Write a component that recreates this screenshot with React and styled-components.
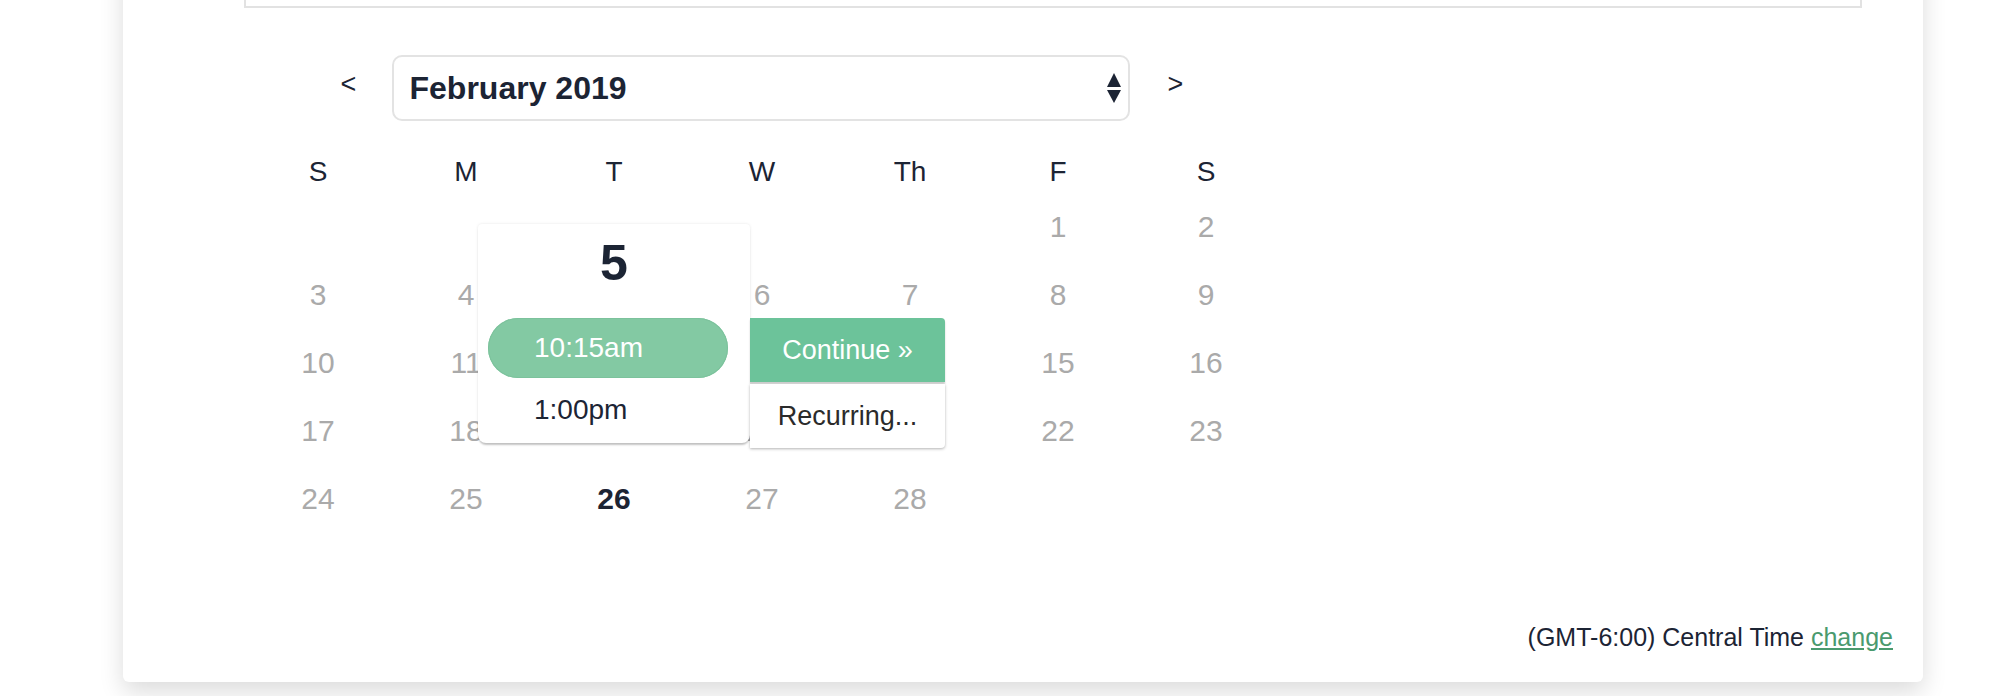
import React from "react";
import styled, { createGlobalStyle } from "styled-components";

const GlobalStyle = createGlobalStyle`
  body {
    margin: 0;
    background: #ffffff;
    font-family: "Liberation Sans", Arial, sans-serif;
    color: #1c2434;
  }
`;

const weeks = [
  [null, null, null, null, null, 1, 2],
  [3, 4, 5, 6, 7, 8, 9],
  [10, 11, 12, 13, 14, 15, 16],
  [17, 18, 19, 20, 21, 22, 23],
  [24, 25, 26, 27, 28, null, null],
];

const dayNames = ["S", "M", "T", "W", "Th", "F", "S"];

export default function App() {
  return (
    <>
      <GlobalStyle />
      <Page>
        <Card>
          <TopBox />
          <Calendar>
            <NavRow>
              <NavButton>&lt;</NavButton>
              <MonthSelect>
                <span>February 2019</span>
                <svg width="14" height="30" viewBox="0 0 14 30">
                  <polygon points="7,0 14,14 0,14" fill="#1c2434" />
                  <polygon points="0,17 14,17 7,30" fill="#1c2434" />
                </svg>
              </MonthSelect>
              <NavButton>&gt;</NavButton>
            </NavRow>

            <WeekHeader>
              {dayNames.map((d, i) => (
                <HeaderCell key={i}>{d}</HeaderCell>
              ))}
            </WeekHeader>

            <DayGrid>
              {weeks.flat().map((day, i) => (
                <DayCell key={i} $today={day === 26}>
                  {day}
                  {day === 5 && (
                    <Popup>
                      <PopupDay>5</PopupDay>
                      <Slot $selected>10:15am</Slot>
                      <Slot>1:00pm</Slot>
                      <Actions>
                        <ContinueButton>Continue »</ContinueButton>
                        <RecurringButton>Recurring...</RecurringButton>
                      </Actions>
                    </Popup>
                  )}
                </DayCell>
              ))}
            </DayGrid>
          </Calendar>

          <Footer>
            (GMT-6:00) Central Time <ChangeLink href="#">change</ChangeLink>
          </Footer>
        </Card>
      </Page>
    </>
  );
}

const Page = styled.div`
  padding-left: 123px;
  height: 696px;
  overflow: hidden;
`;

const Card = styled.div`
  width: 1800px;
  box-sizing: border-box;
  margin-top: -40px;
  padding: 0 30px 30px 121px;
  background: #fff;
  border-radius: 0 0 6px 6px;
  box-shadow: 0 10px 24px rgba(0, 0, 0, 0.14);
`;

const TopBox = styled.div`
  height: 48px;
  box-sizing: border-box;
  margin-right: 31px;
  border: 2px solid #e2e2e2;
  border-top: none;
`;

const Calendar = styled.div`
  width: 1036px;
`;

const NavRow = styled.div`
  display: flex;
  justify-content: center;
  margin-top: 47px;
  height: 66px;
`;

const NavButton = styled.button`
  width: 92px;
  padding: 0 0 7px;
  border: none;
  background: none;
  font-family: inherit;
  font-size: 27px;
  color: #1c2434;
  cursor: pointer;
`;

const MonthSelect = styled.div`
  width: 738px;
  box-sizing: border-box;
  display: flex;
  align-items: center;
  justify-content: space-between;
  margin-left: -3px;
  padding: 0 7px 0 16px;
  border: 2px solid #e3e3e3;
  border-radius: 10px;
  font-size: 32px;
  font-weight: 700;
  color: #1c2434;
`;

const WeekHeader = styled.div`
  display: grid;
  grid-template-columns: repeat(7, 148px);
  margin-top: 30px;
  height: 42px;
`;

const HeaderCell = styled.div`
  display: flex;
  align-items: center;
  justify-content: center;
  font-size: 28px;
  color: #1c2434;
`;

const DayGrid = styled.div`
  display: grid;
  grid-template-columns: repeat(7, 148px);
  grid-auto-rows: 68px;
`;

const DayCell = styled.div`
  position: relative;
  display: flex;
  align-items: center;
  justify-content: center;
  font-size: 30px;
  color: ${(p) => (p.$today ? "#1c2434" : "#aaaaaa")};
  font-weight: ${(p) => (p.$today ? 700 : 400)};
`;

const Popup = styled.div`
  position: absolute;
  left: -62px;
  top: -37px;
  z-index: 2;
  width: 272px;
  box-sizing: border-box;
  padding: 0 22px 5px 10px;
  background: #fff;
  border-radius: 4px 4px 8px 8px;
  box-shadow: 0 3px 2px -1px rgba(0, 0, 0, 0.22), 0 0 3px rgba(0, 0, 0, 0.1);
`;

const PopupDay = styled.div`
  margin: 0 -22px 0 -10px;
  padding: 9px 0 25px;
  line-height: 60px;
  text-align: center;
  font-size: 50px;
  font-weight: 700;
  color: #1c2434;
`;

const Slot = styled.div`
  height: 60px;
  box-sizing: border-box;
  padding-left: 46px;
  line-height: 60px;
  font-size: 28px;
  border-radius: 30px;
  color: ${(p) => (p.$selected ? "#ffffff" : "#1c2434")};
  background: ${(p) => (p.$selected ? "#83c9a3" : "transparent")};
  box-shadow: ${(p) => (p.$selected ? "inset 0 0 0 1px #7cc29c" : "none")};
  & + & {
    line-height: 64px;
  }
`;

const Actions = styled.div`
  position: absolute;
  left: 100%;
  top: 94px;
  width: 195px;
  display: flex;
  flex-direction: column;
  gap: 2px;
  border-radius: 4px;
`;

const ContinueButton = styled.div`
  height: 64px;
  display: flex;
  align-items: center;
  justify-content: center;
  background: #6cc39a;
  color: #fff;
  font-size: 27px;
  border-radius: 0 4px 0 0;
  box-shadow: 0 2px 2px rgba(0, 0, 0, 0.2);
`;

const RecurringButton = styled.div`
  height: 64px;
  display: flex;
  align-items: center;
  justify-content: center;
  background: #fff;
  color: #2b2b2b;
  font-size: 27px;
  border-radius: 0 0 4px 0;
  box-shadow: 0 1px 3px rgba(0, 0, 0, 0.3);
`;

const Footer = styled.div`
  margin-top: 89px;
  text-align: right;
  font-size: 25px;
  line-height: 30px;
  color: #1c2434;
`;

const ChangeLink = styled.a`
  color: #4a9a6e;
  text-decoration: underline;
`;
